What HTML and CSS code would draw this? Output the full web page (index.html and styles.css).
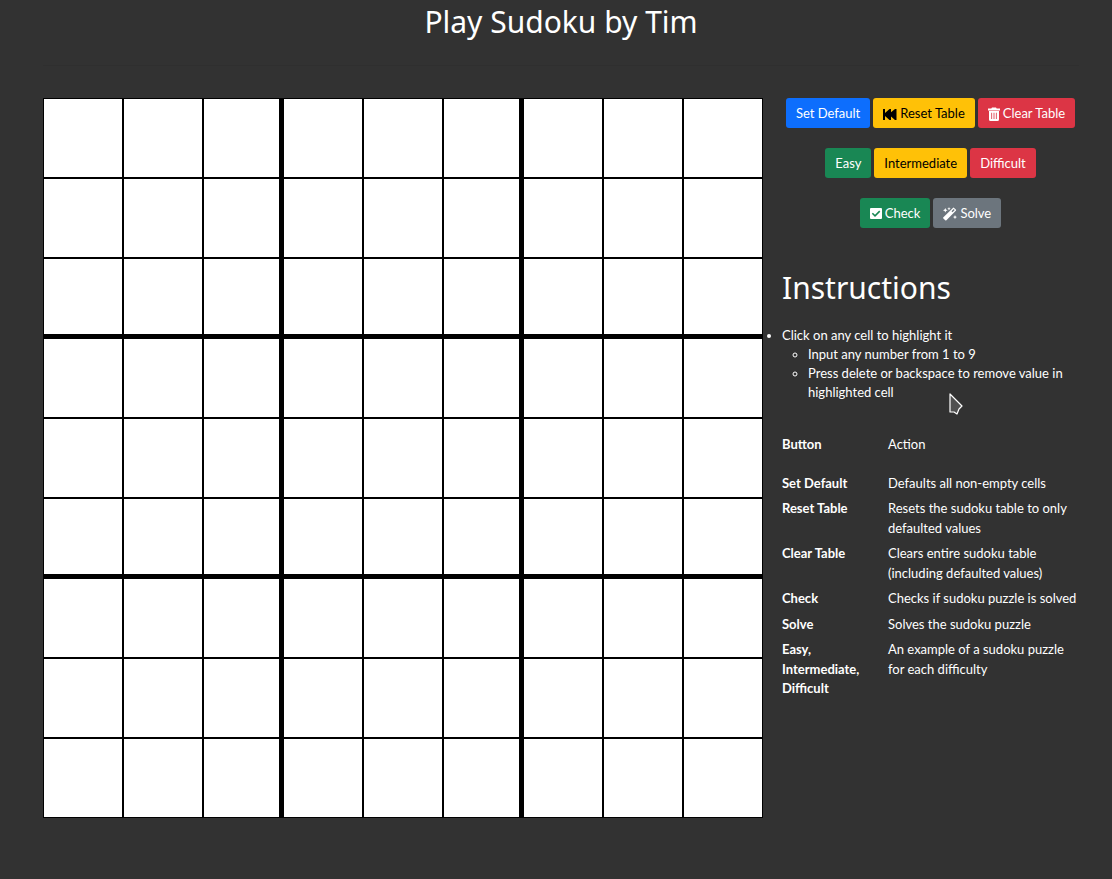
FILE: index.html
```html
<!DOCTYPE html>
<html lang="en">
<head>
<meta charset="utf-8">
<title>Play Sudoku by Tim</title>
<link rel="stylesheet" href="styles.css">
</head>
<body>
<header class="header"><h1 class="title">Play Sudoku by Tim</h1></header>
<hr class="rule">
<main class="layout">
  <div class="board" id="board" role="group" aria-label="Sudoku board"></div>
  <aside class="panel">
    <div class="buttons">
      <div class="button-row">
        <button class="btn blue" type="button">Set Default</button>
        <button class="btn yellow" type="button"><svg class="icon" viewBox="0 0 14 14" aria-hidden="true"><path fill="currentColor" d="M0 2h2v4L6.500 2H8v3.200L12 2h1.500v11H12L8 9.600V13H6.500L2 9v4H0z"/></svg> Reset Table</button>
        <button class="btn red" type="button"><svg class="icon narrow" viewBox="0 0 12 14" aria-hidden="true"><path fill="currentColor" fill-rule="evenodd" d="M0 1.500h3.300L4 .5h4l.7 1H12V3.500H0zM1 4h10v8.500q0 1.500-1.500 1.500h-7Q1 14 1 12.500zm2.300 1.700v6.300h.8V5.700zm2.300 0v6.300h.8V5.700zm2.300 0v6.300h.8V5.700z"/></svg> Clear Table</button>
      </div>
      <div class="button-row">
        <button class="btn green" type="button">Easy</button>
        <button class="btn yellow" type="button">Intermediate</button>
        <button class="btn red" type="button">Difficult</button>
      </div>
      <div class="button-row">
        <button class="btn green" type="button"><svg class="icon narrow" viewBox="0 0 12 14" aria-hidden="true"><path fill="currentColor" fill-rule="evenodd" d="M1 1h10q1 0 1 1v9q0 1-1 1H1q-1 0-1-1V2q0-1 1-1zM5 10l5.300-5.300-1.100-1.100L5 7.800 2.900 5.700 1.800 6.800z"/></svg> Check</button>
        <button class="btn gray" type="button"><svg class="icon" viewBox="0 0 14 14" aria-hidden="true"><path fill="currentColor" fill-rule="evenodd" d="M.4 10.300 9.900.9q.6-.6 1.200 0l1.700 1.700q.6.6 0 1.200L3.400 13.200q-.6.6-1.200 0L.4 11.500q-.6-.6 0-1.200zM8.500 4.200l1 1 2.200-2.100-1-1zM6 0l.5 1.200 1.200.5-1.200.5L6 3.400l-.5-1.200-1.200-.5 1.200-.5zM2.300 1l.7 1.600 1.600.7L3 4l-.7 1.600L1.600 4 0 3.300l1.600-.7zM12 8l.6 1.500 1.400.6-1.400.6L12 12.200l-.6-1.500-1.400-.6 1.400-.6z"/></svg> Solve</button>
      </div>
    </div>
    <h2 class="subtitle">Instructions</h2>
    <ul class="steps">
      <li>Click on any cell to highlight it
        <ul class="substeps">
          <li>Input any number from 1 to 9</li>
          <li>Press delete or backspace to remove value in highlighted cell</li>
        </ul>
      </li>
    </ul>
    <table class="actions">
      <thead><tr><th scope="col">Button</th><th scope="col" class="plain">Action</th></tr></thead>
      <tbody>
        <tr><th scope="row">Set Default</th><td>Defaults all non-empty cells</td></tr>
        <tr><th scope="row">Reset Table</th><td>Resets the sudoku table to only defaulted values</td></tr>
        <tr><th scope="row">Clear Table</th><td>Clears entire sudoku table (including defaulted values)</td></tr>
        <tr><th scope="row">Check</th><td>Checks if sudoku puzzle is solved</td></tr>
        <tr><th scope="row">Solve</th><td>Solves the sudoku puzzle</td></tr>
        <tr><th scope="row">Easy, Intermediate, Difficult</th><td>An example of a sudoku puzzle for each difficulty</td></tr>
      </tbody>
    </table>
  </aside>
</main>
<svg class="pointer" viewBox="0 0 14 22" aria-hidden="true"><path d="M1 1v18h4l3 2 2-5 3-3z" fill="#505050" stroke="#fff" stroke-width="1.200" stroke-linejoin="round"/></svg>
<script src="board.js"></script>
</body>
</html>
```
FILE: styles.css
```css
* { box-sizing: border-box; }
body {
  margin: 0;
  padding: 0 33px 0 43px;
  min-height: 100vh;
  background: #323232;
  color: #fff;
  font: 13px/1.5 Lato, "Noto Sans", sans-serif;
}
.header { padding-top: 2px; text-align: center; }
.title, .subtitle { margin: 0; font: 400 30px/40px "Noto Sans", sans-serif; }
.rule { margin: 23px 0 32px; border: 0; border-top: 1px solid #2f2f2f; }
.layout { display: grid; grid-template-columns: minmax(0, 720px) minmax(316px, 1fr); align-items: start; }
.board { display: grid; grid-template-columns: repeat(9, 1fr); }
.cell {
  width: 100%;
  min-width: 0;
  aspect-ratio: 1;
  margin: 0;
  padding: 0;
  border: 1px solid #000;
  border-radius: 0;
  background: #fff;
  color: #000;
  font: inherit;
  font-size: 32px;
  text-align: center;
}
.cell:focus { outline: 0; background: #cfe2ff; }
.box-right { border-right-width: 4px; }
.box-bottom { border-bottom-width: 4px; }
.panel { padding-left: 19px; }
.buttons { display: flex; flex-direction: column; gap: 20px; }
.button-row { display: flex; justify-content: center; gap: 3px; }
.btn {
  display: flex;
  align-items: center;
  gap: 3px;
  height: 30px;
  padding: 1px 10px 0;
  border: 0;
  border-radius: 3px;
  color: #fff;
  font: inherit;
  white-space: nowrap;
}
.blue { background: #0d6efd; }
.yellow { background: #ffc107; color: #000; }
.red { background: #dc3545; }
.green { background: #198754; }
.gray { background: #6c757d; }
.icon { width: 14px; height: 14px; }
.narrow { width: 12px; }
.subtitle { margin-top: 40px; }
.steps { margin: 18px 0 0; padding: 0; line-height: 19px; }
.substeps { margin: 0; padding-left: 26px; }
.actions { width: 100%; margin-top: 30px; border-collapse: collapse; table-layout: fixed; }
.actions th, .actions td { padding: 3px 0; text-align: left; vertical-align: top; }
.actions th { width: 106px; padding-right: 20px; font-weight: 700; }
.actions thead th { padding-bottom: 16px; }
.actions .plain { width: auto; font-weight: 400; }
.pointer { position: absolute; left: 949px; top: 393px; width: 14px; height: 22px; }
```
FILE: board.js
```js
const board = document.getElementById("board");
for (let row = 1; row <= 9; row++) {
  for (let col = 1; col <= 9; col++) {
    const cell = document.createElement("input");
    cell.className = "cell";
    cell.maxLength = 1;
    cell.inputMode = "numeric";
    cell.setAttribute("aria-label", `Row ${row}, column ${col}`);
    if (col === 3 || col === 6) cell.classList.add("box-right");
    if (row === 3 || row === 6) cell.classList.add("box-bottom");
    board.append(cell);
  }
}
```
